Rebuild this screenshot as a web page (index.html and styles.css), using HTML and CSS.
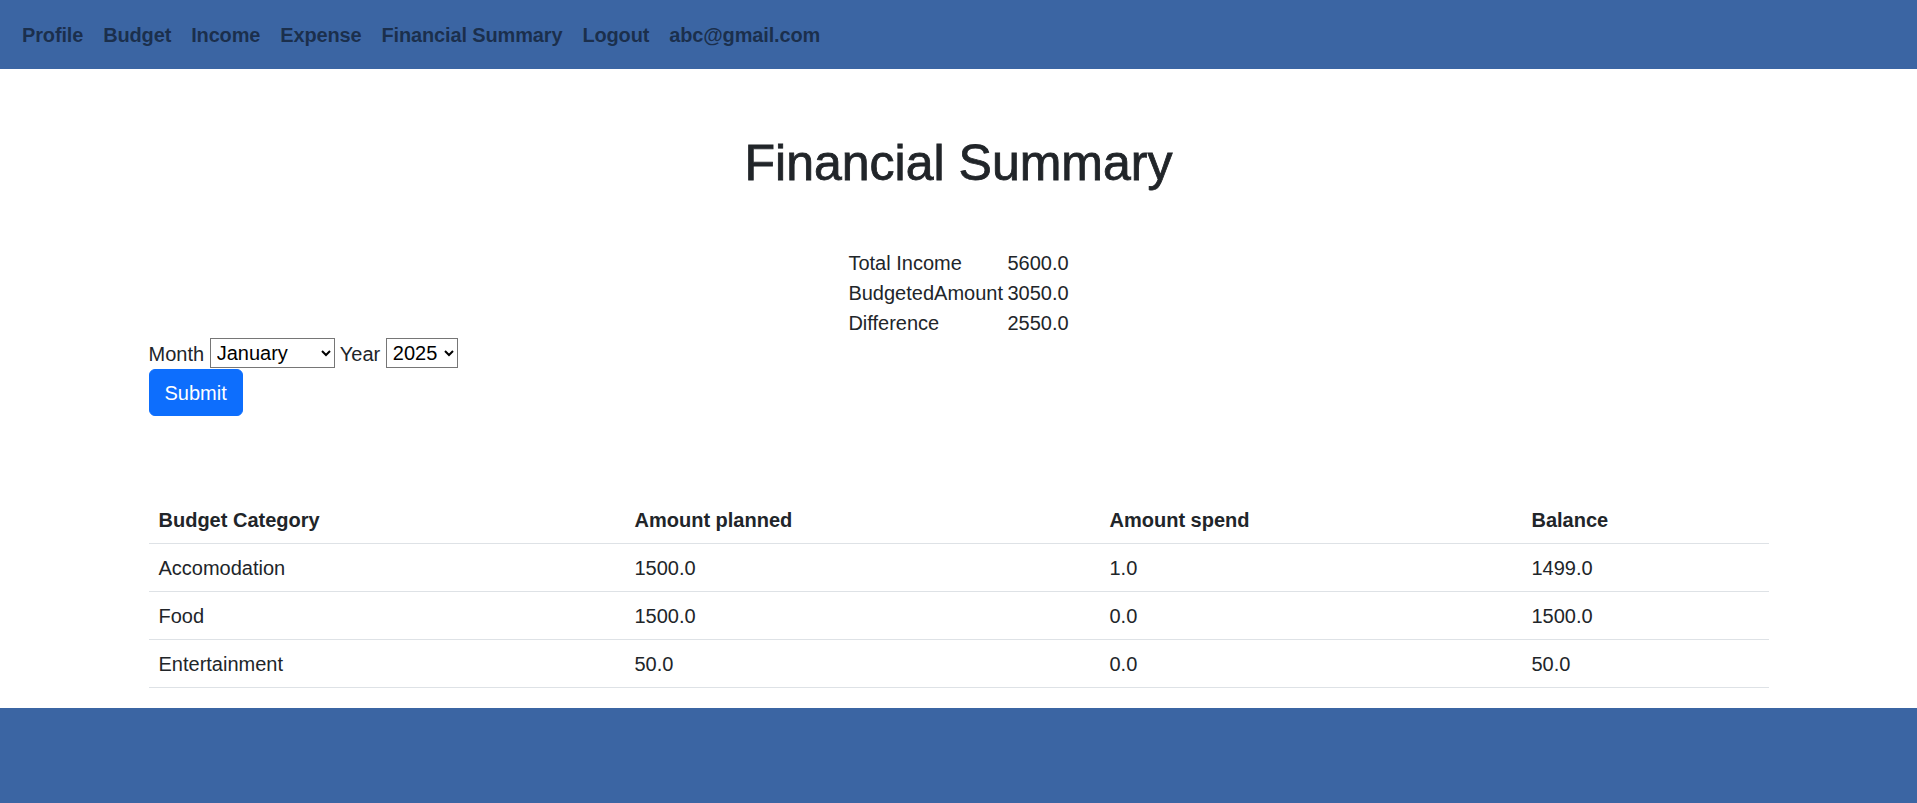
FILE: index.html
```html
<!DOCTYPE html>
<html lang="en">
<head>
<meta charset="utf-8">
<title>Financial Summary</title>
<link rel="stylesheet" href="styles.css">
</head>
<body>
<nav class="navbar">
  <ul class="nav-links">
    <li><a href="#">Profile</a></li>
    <li><a href="#">Budget</a></li>
    <li><a href="#">Income</a></li>
    <li><a href="#">Expense</a></li>
    <li><a href="#">Financial Summary</a></li>
    <li><a href="#">Logout</a></li>
    <li><a href="#">abc@gmail.com</a></li>
  </ul>
</nav>
<main class="container">
  <h1 class="page-title">Financial Summary</h1>
  <table class="summary">
    <tr><td class="summary-label">Total Income</td><td>5600.0</td></tr>
    <tr><td class="summary-label">BudgetedAmount</td><td>3050.0</td></tr>
    <tr><td class="summary-label">Difference</td><td>2550.0</td></tr>
  </table>
  <form class="filter">
    <div class="filter-line">Month <select class="sel sel-month">
        <option>January</option><option>February</option><option>March</option><option>April</option>
        <option>May</option><option>June</option><option>July</option><option>August</option>
        <option>September</option><option>October</option><option>November</option><option>December</option>
      </select> Year <select class="sel sel-year">
        <option>2025</option><option>2024</option><option>2023</option>
      </select></div>
    <button type="button" class="btn-primary">Submit</button>
  </form>
  <table class="budget-table">
    <thead>
      <tr><th class="c1">Budget Category</th><th class="c2">Amount planned</th><th class="c3">Amount spend</th><th class="c4">Balance</th></tr>
    </thead>
    <tbody>
      <tr><td>Accomodation</td><td>1500.0</td><td>1.0</td><td>1499.0</td></tr>
      <tr><td>Food</td><td>1500.0</td><td>0.0</td><td>1500.0</td></tr>
      <tr><td>Entertainment</td><td>50.0</td><td>0.0</td><td>50.0</td></tr>
    </tbody>
  </table>
</main>
<footer class="footer"></footer>
</body>
</html>
```
FILE: styles.css
```css
* { box-sizing: border-box; }
html, body { margin: 0; padding: 0; }
body {
  font-family: "Liberation Sans", Arial, sans-serif;
  font-size: 20px;
  line-height: 30px;
  color: #212529;
  background: #fff;
}
.navbar {
  background: #3b65a3;
  height: 69px;
  display: flex;
  align-items: center;
  padding: 0 12px;
}
.nav-links {
  list-style: none;
  margin: 0;
  padding: 0;
  display: flex;
}
.nav-links a {
  display: block;
  padding: 0 10px;
  font-weight: bold;
  letter-spacing: -0.15px;
  text-decoration: none;
  color: rgba(0, 0, 0, 0.55);
  line-height: 30px;
}
.container {
  width: 1650px;
  margin: 0 auto;
  padding: 0 15px;
}
.page-title {
  margin: 64px 0 55px;
  text-align: center;
  font-size: 50px;
  line-height: 60px;
  font-weight: 500;
  -webkit-text-stroke: 0.8px #212529;
}
.summary {
  margin: 0 auto;
  border-collapse: collapse;
}
.summary td {
  padding: 0;
  line-height: 30px;
}
.summary-label { width: 159px; }
.filter { margin: 0; }
.filter-line {
  height: 30px;
  line-height: 33px;
}
.sel {
  font-family: inherit;
  font-size: 20px;
  height: 30px;
  border: 1px solid #767676;
  border-radius: 0;
  background: #fff;
  color: #000;
  padding: 0 2px;
  vertical-align: top;
}
.sel-month { width: 125px; }
.sel-year { width: 72px; }
.btn-primary {
  display: block;
  margin-top: 1px;
  font-family: inherit;
  font-size: 20px;
  line-height: 30px;
  color: #fff;
  background: #0d6efd;
  border: 1px solid #0d6efd;
  border-radius: 6px;
  padding: 7px 15px;
  height: 47px;
  cursor: pointer;
}
.budget-table {
  width: 100%;
  margin: 80px 0 20px;
  border-collapse: collapse;
  table-layout: fixed;
}
.budget-table th,
.budget-table td {
  text-align: left;
  padding: 9px 10px 8px;
  line-height: 30px;
  border-bottom: 1px solid #dee2e6;
}
.budget-table th { font-weight: bold; }
.c1 { width: 476px; }
.c2 { width: 475px; }
.c3 { width: 422px; }
.c4 { width: 247px; }
.footer {
  background: #3b65a3;
  height: 120px;
}
```
